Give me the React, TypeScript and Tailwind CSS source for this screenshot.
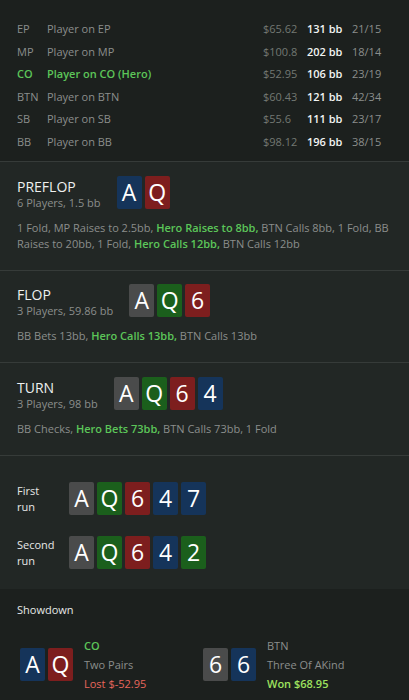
import React from 'react';

type CardColor = 'blue' | 'red' | 'green' | 'gray';

const cardBg: Record<CardColor, string> = {
  blue: 'bg-[#15345a]',
  red: 'bg-[#7d1e1e]',
  green: 'bg-[#1b5f1c]',
  gray: 'bg-[#4a4b4b]',
};

function Card({ rank, color }: { rank: string; color: CardColor }) {
  return (
    <div
      className={`${cardBg[color]} flex h-[33px] w-[25px] items-center justify-center rounded-[2px] text-[23px] leading-none text-white`}
    >
      {rank}
    </div>
  );
}

function Cards({ cards }: { cards: [string, CardColor][] }) {
  return (
    <div className="flex gap-[3px]">
      {cards.map(([r, c], i) => (
        <Card key={i} rank={r} color={c} />
      ))}
    </div>
  );
}

const players = [
  { pos: 'EP', name: 'Player on EP', stack: '$65.62', bb: '131 bb', ratio: '21/15' },
  { pos: 'MP', name: 'Player on MP', stack: '$100.8', bb: '202 bb', ratio: '18/14' },
  { pos: 'CO', name: 'Player on CO (Hero)', stack: '$52.95', bb: '106 bb', ratio: '23/19', hero: true },
  { pos: 'BTN', name: 'Player on BTN', stack: '$60.43', bb: '121 bb', ratio: '42/34' },
  { pos: 'SB', name: 'Player on SB', stack: '$55.6', bb: '111 bb', ratio: '23/17' },
  { pos: 'BB', name: 'Player on BB', stack: '$98.12', bb: '196 bb', ratio: '38/15' },
];

function Hero({ children }: { children: React.ReactNode }) {
  return <span className="font-semibold text-[#5cc659]">{children}</span>;
}

function Street({
  title,
  sub,
  cards,
  children,
  pt,
}: {
  title: string;
  sub: string;
  cards: [string, CardColor][];
  children: React.ReactNode;
  pt: string;
}) {
  return (
    <section className={`border-t border-[#363b39] bg-[#222725] px-[17px] ${pt}`}>
      <div className="flex items-start gap-4">
        <div className="pt-[2px]">
          <div className="text-[14px] leading-[17px] text-[#eef0ef]">{title}</div>
          <div className="text-[11px] leading-[15px] text-[#8b8e8c]">{sub}</div>
        </div>
        <Cards cards={cards} />
      </div>
      <p className="mt-[10px] text-[11px] leading-[16px] text-[#8b8e8c]">{children}</p>
    </section>
  );
}

export default function App() {
  return (
    <div className="min-h-[700px] bg-[#1c201e] font-['Open_Sans',sans-serif]">
      {/* Players */}
      <div className="pb-[8px] pt-[18px] text-[11px]">
        {players.map((p) => (
          <div
            key={p.pos}
            className="grid h-[22.5px] grid-cols-[30px_1fr_44px_45px_40px] items-center px-[17px]"
          >
            <span className={p.hero ? 'font-semibold text-[#5cc659]' : 'text-[#8b8e8c]'}>{p.pos}</span>
            <span className={p.hero ? 'font-semibold text-[#5cc659]' : 'text-[#8b8e8c]'}>{p.name}</span>
            <span className="text-[#737873]">{p.stack}</span>
            <span className="font-semibold text-[#f2f4f3]">{p.bb}</span>
            <span className="text-[#8b8e8c]">{p.ratio}</span>
          </div>
        ))}
      </div>

      <Street
        title="PREFLOP"
        sub="6 Players, 1.5 bb"
        pt="pt-[14px] pb-[18px]"
        cards={[
          ['A', 'blue'],
          ['Q', 'red'],
        ]}
      >
        1 Fold, MP Raises to 2.5bb, <Hero>Hero Raises to 8bb,</Hero> BTN Calls 8bb, 1 Fold, BB Raises to 20bb, 1 Fold,{' '}
        <Hero>Hero Calls 12bb,</Hero> BTN Calls 12bb
      </Street>

      <Street
        title="FLOP"
        sub="3 Players, 59.86 bb"
        pt="pt-[13px] pb-[18px]"
        cards={[
          ['A', 'gray'],
          ['Q', 'green'],
          ['6', 'red'],
        ]}
      >
        BB Bets 13bb, <Hero>Hero Calls 13bb,</Hero> BTN Calls 13bb
      </Street>

      <Street
        title="TURN"
        sub="3 Players, 98 bb"
        pt="pt-[14px] pb-[18px]"
        cards={[
          ['A', 'gray'],
          ['Q', 'green'],
          ['6', 'red'],
          ['4', 'blue'],
        ]}
      >
        BB Checks, <Hero>Hero Bets 73bb,</Hero> BTN Calls 73bb, 1 Fold
      </Street>

      {/* Runs */}
      <section className="flex flex-col gap-[21px] border-t border-[#363b39] bg-[#222725] px-[17px] pb-[20px] pt-[26px]">
        {[
          { label: ['First', 'run'], river: ['7', 'blue'] as [string, CardColor] },
          { label: ['Second', 'run'], river: ['2', 'green'] as [string, CardColor] },
        ].map((run) => (
          <div key={run.label[0]} className="flex items-center">
            <div className="w-[52px] text-[11px] font-medium leading-[16px] text-[#e6e8e7]">
              {run.label[0]}
              <br />
              {run.label[1]}
            </div>
            <Cards
              cards={[
                ['A', 'gray'],
                ['Q', 'green'],
                ['6', 'red'],
                ['4', 'blue'],
                run.river,
              ]}
            />
          </div>
        ))}
      </section>

      {/* Showdown */}
      <section className="bg-[#1c201e] px-[17px] pb-[20px] pt-[12px]">
        <div className="text-[11px] font-medium leading-[18px] text-[#e6e8e7]">Showdown</div>
        <div className="mt-[17px] flex px-[3px]">
          <div className="flex w-[183px] items-center gap-[11px]">
            <Cards
              cards={[
                ['A', 'blue'],
                ['Q', 'red'],
              ]}
            />
            <div className="text-[11px] leading-[19px]">
              <div className="font-semibold text-[#5cc659]">CO</div>
              <div className="text-[#8b8e8c]">Two Pairs</div>
              <div className="text-[#e8665c]">Lost $-52.95</div>
            </div>
          </div>
          <div className="flex items-center gap-[11px]">
            <Cards
              cards={[
                ['6', 'gray'],
                ['6', 'blue'],
              ]}
            />
            <div className="text-[11px] leading-[19px]">
              <div className="text-[#8b8e8c]">BTN</div>
              <div className="text-[#8b8e8c]">Three Of AKind</div>
              <div className="font-semibold text-[#9ee25e]">Won $68.95</div>
            </div>
          </div>
        </div>
      </section>
    </div>
  );
}
